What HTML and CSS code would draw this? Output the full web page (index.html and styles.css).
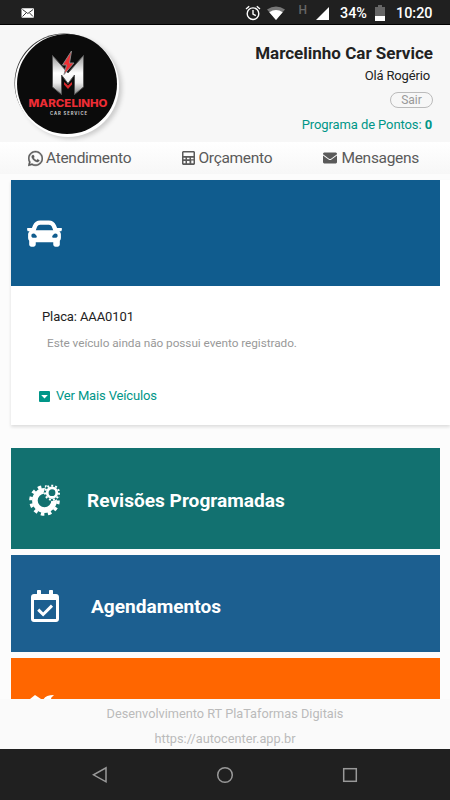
FILE: index.html
```
<!DOCTYPE html>
<html lang="pt-BR">
<head>
    <meta charset="UTF-8">
    <meta name="viewport" content="width=device-width, initial-scale=1.0">
    <title>Marcelinho Car Service</title>
    <link rel="stylesheet" href="styles.css">
</head>
<body>
    <div class="status-bar">
        <svg class="status-mail" width="14" height="10" viewBox="0 0 14 10"><rect x=".5" y=".2" width="12.5" height="9.6" rx="1" fill="#fff"/><path d="M1.5 1.5l5.3 4 5.3-4M1.5 8.5L5 5M12 8.5L8.600 5" fill="none" stroke="#202020" stroke-width=".9"/></svg>
        <svg class="status-alarm" width="16" height="16" viewBox="0 0 16 16" fill="none" stroke="#fff" stroke-width="1.4"><circle cx="8" cy="8.700" r="5.800"/><path d="M8 5v4l2.800 1.700M1 4l3.200-2.700M15 4l-3.200-2.700"/></svg>
        <svg class="status-wifi" width="18" height="14" viewBox="0 0 18 14"><path d="M0 3.500Q9-2.500 18 3.500L9 14z" fill="#777"/><path d="M2.300 6.200Q9 1.800 15.700 6.200L9 14z" fill="#fff"/></svg>
        <span class="network">H</span>
        <svg class="status-signal" width="13" height="13" viewBox="0 0 13 13"><path d="M13 0v13H0z" fill="#fff"/></svg>
        <span class="percent">34%</span>
        <svg class="status-battery" width="10" height="16" viewBox="0 0 10 16"><path d="M3 0h4v2h3v9H0V2h3z" fill="#666"/><path d="M0 11h10v5H0z" fill="#fff"/></svg>
        <span class="clock">10:20</span>
    </div>

    <header class="header">
        <div class="logo">
            <svg width="100" height="100" viewBox="0 0 100 100">
                <defs>
                    <linearGradient id="metal" x1="0" y1="0" x2="0" y2="1">
                        <stop offset="0" stop-color="#999"/>
                        <stop offset=".45" stop-color="#fff"/>
                        <stop offset=".7" stop-color="#eee"/>
                        <stop offset="1" stop-color="#888"/>
                    </linearGradient>
                </defs>
                <path d="M35.500 21.500L51 39l15.500-17.500V53L57.500 60.500V41L51 49.500 44.500 41v19.500L35.500 53z" fill="url(#metal)" stroke="#555" stroke-width="1"/>
                <path d="M54.500 17L45.500 31h4l-2.500 9.500L57 29h-4.500z" fill="#ed3035" stroke="#888" stroke-width="1"/>
                <path d="M47 48l4 3.500 4-3.500v2.500l-4 4.500-4-4.500z" fill="#d92a2d"/>
                <text x="11.500" y="73" textLength="79" lengthAdjust="spacingAndGlyphs" class="logo-name">MARCELINHO</text>
                <text x="33" y="80.500" textLength="37" class="logo-sub">CAR SERVICE</text>
            </svg>
        </div>
        <div class="account">
            <h1>Marcelinho Car Service</h1>
            <p class="hello">Olá Rogério</p>
            <a class="logout">Sair</a>
            <p class="points">Programa de Pontos: <b>0</b></p>
        </div>
    </header>

    <nav class="tabs">
        <a class="tab tab-whats">
            <svg width="15" height="17" viewBox="0 0 448 512" fill="currentColor" stroke="currentColor" stroke-width="14"><path d="M380.900 97.100C339 55.100 283.200 32 223.900 32c-122.400 0-222 99.600-222 222 0 39.100 10.200 77.300 29.600 111L0 480l117.700-30.900c32.400 17.700 68.900 27 106.100 27h.1c122.300 0 224.100-99.600 224.100-222 0-59.300-25.200-115-67.100-157zm-157 341.600c-33.200 0-65.700-8.900-94-25.700l-6.700-4-69.800 18.300L72 359.200l-4.400-7c-18.500-29.400-28.200-63.300-28.200-98.200 0-101.700 82.800-184.500 184.600-184.500 49.300 0 95.600 19.200 130.400 54.100 34.800 34.900 56.200 81.200 56.100 130.500 0 101.800-84.900 184.600-186.600 184.600zm101.200-138.200c-5.500-2.800-32.800-16.200-37.900-18-5.100-1.900-8.800-2.800-12.500 2.800-3.700 5.600-14.300 18-17.600 21.800-3.200 3.700-6.500 4.200-12 1.400-32.600-16.300-54-29.100-75.500-66-5.700-9.800 5.700-9.100 16.300-30.300 1.800-3.700.9-6.900-.5-9.700-1.400-2.800-12.500-30.100-17.100-41.200-4.500-10.800-9.100-9.300-12.500-9.500-3.200-.2-6.900-.2-10.600-.2-3.700 0-9.700 1.400-14.800 6.900-5.100 5.600-19.400 19-19.400 46.300 0 27.300 19.900 53.700 22.600 57.400 2.800 3.700 39.100 59.700 94.800 83.800 35.200 15.200 49 16.500 66.600 13.900 10.700-1.600 32.800-13.400 37.400-26.400 4.600-13 4.600-24.100 3.200-26.400-1.300-2.500-5-3.900-10.500-6.600z"/></svg>
            <span>Atendimento</span>
        </a>
        <a class="tab tab-budget">
            <svg width="13" height="14" viewBox="0 0 13 14"><path fill="currentColor" fill-rule="evenodd" d="M1 0h11l1 1v12l-1 1H1l-1-1V1zM1.500 1.500v3.500h10V1.500zM1.500 6.700v1.600h2V6.700zM5 6.700v1.600h2.500V6.700zM9 6.700v1.600h2.500V6.700zM1.500 10v2.300h2V10zM5 10v2.300h2.500V10zM9.300 9.500v2.800h2.200V9.500z"/></svg>
            <span>Orçamento</span>
        </a>
        <a class="tab tab-messages">
            <svg width="14" height="12" viewBox="0 0 14 12"><path fill="currentColor" d="M1 .5h12l1 1v.8L8 6.700q-1 .7-2 0L0 2.300v-.8zM0 3.600l5.500 4q1.500 1 3 0L14 3.600V10.500l-1 1H1l-1-1z"/></svg>
            <span>Mensagens</span>
        </a>
    </nav>

    <main class="content">
        <section class="vehicle">
            <div class="banner">
                <svg width="35" height="35" viewBox="0 0 512 512" fill="#fff"><path d="M499.990 176h-59.870l-16.640-41.600C406.380 91.630 365.570 64 319.500 64h-127c-46.060 0-86.880 27.630-103.990 70.400L71.870 176H12.010C4.200 176-1.530 183.340.37 190.910l6 24C7.700 220.250 12.500 224 18.010 224h20.070C24.650 235.730 16 252.780 16 272v48c0 16.120 6.160 30.670 16 41.930V416c0 17.670 14.330 32 32 32h32c17.670 0 32-14.330 32-32v-32h256v32c0 17.670 14.330 32 32 32h32c17.670 0 32-14.330 32-32v-54.070c9.840-11.250 16-25.800 16-41.930v-48c0-19.220-8.650-36.270-22.070-48H494c5.510 0 10.310-3.750 11.640-9.090l6-24c1.890-7.570-3.840-14.910-11.650-14.910zm-352.060-17.830c7.290-18.220 24.940-30.170 44.570-30.170h127c19.630 0 37.280 11.950 44.570 30.170L384 208H128l19.930-49.830zM96 319.800c-19.200 0-32-12.760-32-31.900S76.800 256 96 256s48 28.710 48 47.850-28.800 15.950-48 15.950zm320 0c-19.200 0-48 3.190-48-15.950S396.800 256 416 256s32 12.760 32 31.900-12.800 31.900-32 31.900z"/></svg>
            </div>
            <div class="details">
                <p class="plate">Placa: AAA0101</p>
                <p class="empty">Este veículo ainda não possui evento registrado.</p>
                <a class="more">
                    <svg width="11" height="11" viewBox="0 0 11 11"><rect width="11" height="11" rx="1" fill="#009688"/><path d="M2.200 4h6.600L5.500 7.500z" fill="#fff"/></svg>
                    <span>Ver Mais Veículos</span>
                </a>
            </div>
        </section>

        <section class="menu">
            <a class="item reviews">
                <svg width="32" height="32" viewBox="0 0 32 32" fill="none">
                    <circle cx="15.500" cy="16.500" r="9.600" stroke="#fff" stroke-width="5.600"/>
                    <circle cx="15.500" cy="16.500" r="13.600" stroke="#fff" stroke-width="3.400" stroke-dasharray="3.560"/>
                    <circle cx="23" cy="8.700" r="8.300" fill="#127170"/>
                    <circle cx="23" cy="8.700" r="4.800" stroke="#fff" stroke-width="2.800"/>
                    <circle cx="23" cy="8.700" r="7" stroke="#fff" stroke-width="2" stroke-dasharray="2 1.998"/>
                </svg>
                <span>Revisões Programadas</span>
            </a>
            <a class="item schedule">
                <svg width="28" height="32" viewBox="0 0 448 512" fill="#fff"><path fill-rule="evenodd" d="M400 64h-48V12c0-7-5-12-12-12h-40c-7 0-12 5-12 12v52H160V12c0-7-5-12-12-12h-40c-7 0-12 5-12 12v52H48C21 64 0 85 0 112v352c0 27 21 48 48 48h352c27 0 48-21 48-48V112c0-27-21-48-48-48zM48 160h352v298q0 6-6 6H54q-6 0-6-6z"/><path d="M116 314l78 78 142-142" fill="none" stroke="#fff" stroke-width="48"/></svg>
                <span>Agendamentos</span>
            </a>
            <a class="item tools">
                <svg width="30" height="30" viewBox="0 0 30 30" fill="#fff"><path d="M1 5l5-4 6 4v3l14 14-4 5L8 12H5z"/><path d="M14 7q1-6 11-6l-3 3 1 4 4 1 3-3q1 8-7 9L9 28l-5-4L16 13q-2-2-2-6z"/></svg>
            </a>
        </section>
    </main>

    <footer class="footer">
        <p>Desenvolvimento RT PlaTaformas Digitais</p>
        <p>https://autocenter.app.br</p>
    </footer>

    <div class="android-nav">
        <svg width="16" height="18" viewBox="0 0 16 18"><path d="M14 1.800v14L1.500 8.800z"/></svg>
        <svg width="18" height="18" viewBox="0 0 18 18"><circle cx="9" cy="9" r="7.300"/></svg>
        <svg width="16" height="16" viewBox="0 0 16 16"><rect x="1.700" y="1.700" width="12.600" height="12.600"/></svg>
    </div>
</body>
</html>
```
FILE: styles.css
```
* {
    margin: 0;
    padding: 0;
    box-sizing: border-box;
}

body {
    display: flex;
    flex-direction: column;
    width: 450px;
    height: 800px;
    overflow: hidden;
    background: #fcfcfc;
    font-family: Roboto, sans-serif;
    color: #222;
}

svg {
    display: block;
    flex: none;
}

/* Android status bar */
.status-bar {
    display: flex;
    align-items: center;
    height: 25px;
    padding: 2px 16px 0 21px;
    background: #202020;
    border-bottom: 1px solid #000;
    color: #fff;
    font-size: 14.4px;
    font-weight: 500;
    flex: none;
}

.status-alarm {
    margin-left: auto;
}

.status-wifi {
    margin-left: 6px;
}

.network {
    margin: -6px 9px 0 13px;
    color: #666;
    font-size: 12px;
}

.percent {
    width: 28px;
    margin-left: 11px;
}

.status-battery {
    margin-left: 7px;
}

.clock {
    width: 38px;
    margin-left: 11px;
    white-space: nowrap;
}

/* header */
.header {
    display: flex;
    justify-content: space-between;
    height: 117px;
    padding: 9px 17px 0 17px;
    background: #f7f7f7;
    flex: none;
}

.logo {
    width: 100px;
    height: 100px;
    border-radius: 50%;
    background: #0b0b0b;
    box-shadow: 1px 2px 0 1px #fff, -2px 0 0 0 #fff, -3px -1px 0 -0.5px #333, 4px 4px 4px 1px #ccc;
}

.logo-name {
    font: 800 10.2px Inter, sans-serif;
    fill: #ed2d35;
}

.logo-sub {
    font: 700 4.2px Inter, sans-serif;
    fill: #ccc;
}

.account {
    display: flex;
    flex-direction: column;
    align-items: flex-end;
    padding-top: 9px;
}

.account h1 {
    font-size: 17px;
    line-height: 20px;
    font-weight: 700;
}

.hello {
    margin: 5px 3px 0 0;
    font-size: 13px;
    line-height: 16px;
    letter-spacing: -0.15px;
}

.logout {
    width: 43px;
    height: 16px;
    margin-top: 8px;
    border: 1px solid #bbb;
    border-radius: 8px;
    color: #999;
    font-size: 12px;
    line-height: 14px;
    text-align: center;
}

.points {
    margin: 9px 1px 0 0;
    color: #009688;
    font-size: 13px;
    line-height: 16px;
    letter-spacing: -0.1px;
}

/* shortcuts */
.tabs {
    display: flex;
    height: 32px;
    padding: 0 31px 0 28px;
    background: linear-gradient(#fff, #f7f7f7);
    color: #5a5a5a;
    font-size: 15.5px;
    letter-spacing: -0.3px;
    justify-content: space-between;
    flex: none;
}

.tab {
    display: flex;
    align-items: center;
    gap: 3px;
}

.tab-messages {
    gap: 4px;
}

/* vehicle */
.content {
    flex: 1;
    min-height: 0;
    overflow: hidden;
    padding-top: 6px;
}

.vehicle {
    height: 245px;
    margin-left: 11px;
    background: #fff;
    box-shadow: 0 2px 3px #ddd;
}

.banner {
    display: flex;
    align-items: center;
    width: 429px;
    height: 106px;
    padding-left: 16px;
    background: #105c8e;
}

.details {
    padding: 22px 0 0 31px;
}

.plate {
    font-size: 13px;
    line-height: 18px;
    letter-spacing: -0.1px;
}

.empty {
    margin: 8px 0 0 5px;
    color: #999;
    font-size: 11.8px;
    line-height: 18px;
    letter-spacing: -0.05px;
}

.more {
    display: flex;
    align-items: center;
    gap: 6px;
    margin: 35px 0 0 -3px;
    color: #009688;
    font-size: 13px;
    line-height: 18px;
    letter-spacing: -0.15px;
}

/* menu */
.menu {
    display: grid;
    gap: 6px;
    width: 429px;
    margin: 23px 0 0 11px;
}

.item {
    display: flex;
    align-items: center;
    color: #fff;
    font-size: 19.1px;
    font-weight: 700;
}

.reviews {
    height: 101px;
    padding: 3px 0 0 18px;
    gap: 26px;
    background: #127170;
}

.schedule {
    height: 97px;
    padding: 5px 0 0 20px;
    gap: 32px;
    background: #1c5f90;
}

.tools {
    height: 99px;
    padding: 2px 0 0 18px;
    background: #ff6600;
}

/* footer */
.footer {
    height: 50px;
    padding-top: 6px;
    background: #fafafa;
    color: #bbb;
    font-size: 12.75px;
    line-height: 17px;
    text-align: center;
    flex: none;
}

.footer p + p {
    margin-top: 8px;
}

.android-nav {
    display: flex;
    align-items: center;
    justify-content: space-between;
    height: 51px;
    padding: 0 92px;
    background: #202020;
    flex: none;
}

.android-nav svg {
    fill: none;
    stroke: #999;
    stroke-width: 1.5;
}
```
